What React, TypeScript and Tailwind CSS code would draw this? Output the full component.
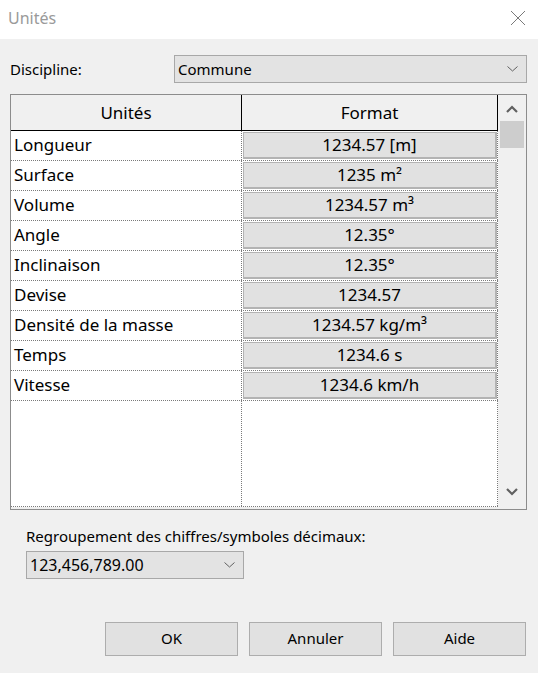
import { memo } from 'react'

interface UnitRow {
  name: string
  format: string
}

const rows: UnitRow[] = [
  { name: 'Longueur', format: '1234.57 [m]' },
  { name: 'Surface', format: '1235 m²' },
  { name: 'Volume', format: '1234.57 m³' },
  { name: 'Angle', format: '12.35°' },
  { name: 'Inclinaison', format: '12.35°' },
  { name: 'Devise', format: '1234.57' },
  { name: 'Densité de la masse', format: '1234.57 kg/m³' },
  { name: 'Temps', format: '1234.6 s' },
  { name: 'Vitesse', format: '1234.6 km/h' },
]

const font = { fontFamily: '"Noto Sans", "Liberation Sans", sans-serif' }

/** 下拉箭头 */
const ComboChevron = () => (
  <svg width="11" height="6" viewBox="0 0 11 6" className="shrink-0">
    <polyline points="0.5,0.5 5.5,5 10.5,0.5" fill="none" stroke="#606060" strokeWidth="1" />
  </svg>
)

const ScrollChevron = ({ up }: { up?: boolean }) => (
  <svg width="12" height="8" viewBox="0 0 12 8">
    <polyline
      points={up ? '1,7 6,2 11,7' : '1,1 6,6 11,1'}
      fill="none"
      stroke="#606060"
      strokeWidth="2.2"
    />
  </svg>
)

const Button = memo(({ label }: { label: string }) => (
  <button className="h-[34px] w-[133px] border border-[#adadad] bg-[#e1e1e1] pb-[2px] text-[15px] text-black">
    {label}
  </button>
))
Button.displayName = 'Button'

export default function App() {
  return (
    <div className="flex h-[673px] w-[538px] flex-col bg-[#f0f0f0] text-black" style={font}>
      {/* 标题栏 */}
      <div className="flex h-[39px] items-center justify-between bg-white pb-[3px] pl-[8px] pr-[12px]">
        <span className="text-[16px] text-[#9a9a9a]">Unités</span>
        <svg width="16" height="16" viewBox="0 0 16 16">
          <path d="M1 1 L15 15 M15 1 L1 15" stroke="#7a7a7a" strokeWidth="1" fill="none" />
        </svg>
      </div>

      <div className="flex flex-col pl-[10px] pr-[11px]">
        {/* Discipline */}
        <div className="mt-[16px] flex h-[28px] items-center">
          <span className="w-[164px] text-[15px]">Discipline:</span>
          <div className="flex h-[28px] flex-1 items-center justify-between border border-[#a8a8a8] bg-[#e3e3e3] pl-[3px] pr-[8px] text-[15px]">
            <span>Commune</span>
            <ComboChevron />
          </div>
        </div>

        {/* 表格 */}
        <div className="mt-[11px] flex h-[416px] border border-[#8c8c8c] bg-[#f0f0f0]">
          <div className="flex w-[487px] flex-col bg-white">
            <div className="flex h-[36px] border-b border-black bg-[#f0f0f0] text-[17px]">
              <div className="flex w-[231px] items-center justify-center border-r border-black">Unités</div>
              <div className="flex flex-1 items-center justify-center border-r border-black">Format</div>
            </div>
            {rows.map((row) => (
              <div key={row.name} className="flex h-[30px] border-b border-dotted border-[#7a7a7a] text-[17px]">
                <div className="flex w-[231px] items-center border-r border-dotted border-[#7a7a7a] pb-[2px] pl-[3px]">
                  {row.name}
                </div>
                <div className="flex flex-1 border-r border-dotted border-[#7a7a7a] py-[1px] pl-[1px]">
                  <div className="flex flex-1 items-center justify-center border border-b-2 border-r-2 border-[#b3b3b3] bg-[#e1e1e1] pb-[1px]">
                    {row.format}
                  </div>
                </div>
              </div>
            ))}
            <div className="flex h-[106px] border-b border-dotted border-[#7a7a7a]">
              <div className="w-[231px] border-r border-dotted border-[#7a7a7a]" />
              <div className="flex-1 border-r border-dotted border-[#7a7a7a]" />
            </div>
            <div className="flex-1 bg-[#f0f0f0]" />
          </div>

          {/* 滚动条 */}
          <div className="flex flex-1 flex-col items-center">
            <div className="flex h-[26px] items-center justify-center pt-[2px]">
              <ScrollChevron up />
            </div>
            <div className="h-[27px] w-[24px] bg-[#cdcdcd]" />
            <div className="flex-1" />
            <div className="flex h-[26px] items-center justify-center pb-[8px]">
              <ScrollChevron />
            </div>
          </div>
        </div>
      </div>

      {/* 数字分组 */}
      <div className="mt-[16px] flex flex-col pl-[26px]">
        <span className="h-[20px] text-[15px] leading-[20px]">Regroupement des chiffres/symboles décimaux:</span>
        <div className="mt-[5px] flex h-[28px] w-[218px] items-center justify-between border border-[#a8a8a8] bg-[#e3e3e3] pl-[3px] pr-[8px] text-[16px]">
          <span>123,456,789.00</span>
          <ComboChevron />
        </div>
      </div>

      {/* 按钮 */}
      <div className="mt-[43px] flex justify-end gap-[11px] pr-[12px]">
        <Button label="OK" />
        <Button label="Annuler" />
        <Button label="Aide" />
      </div>
    </div>
  )
}
